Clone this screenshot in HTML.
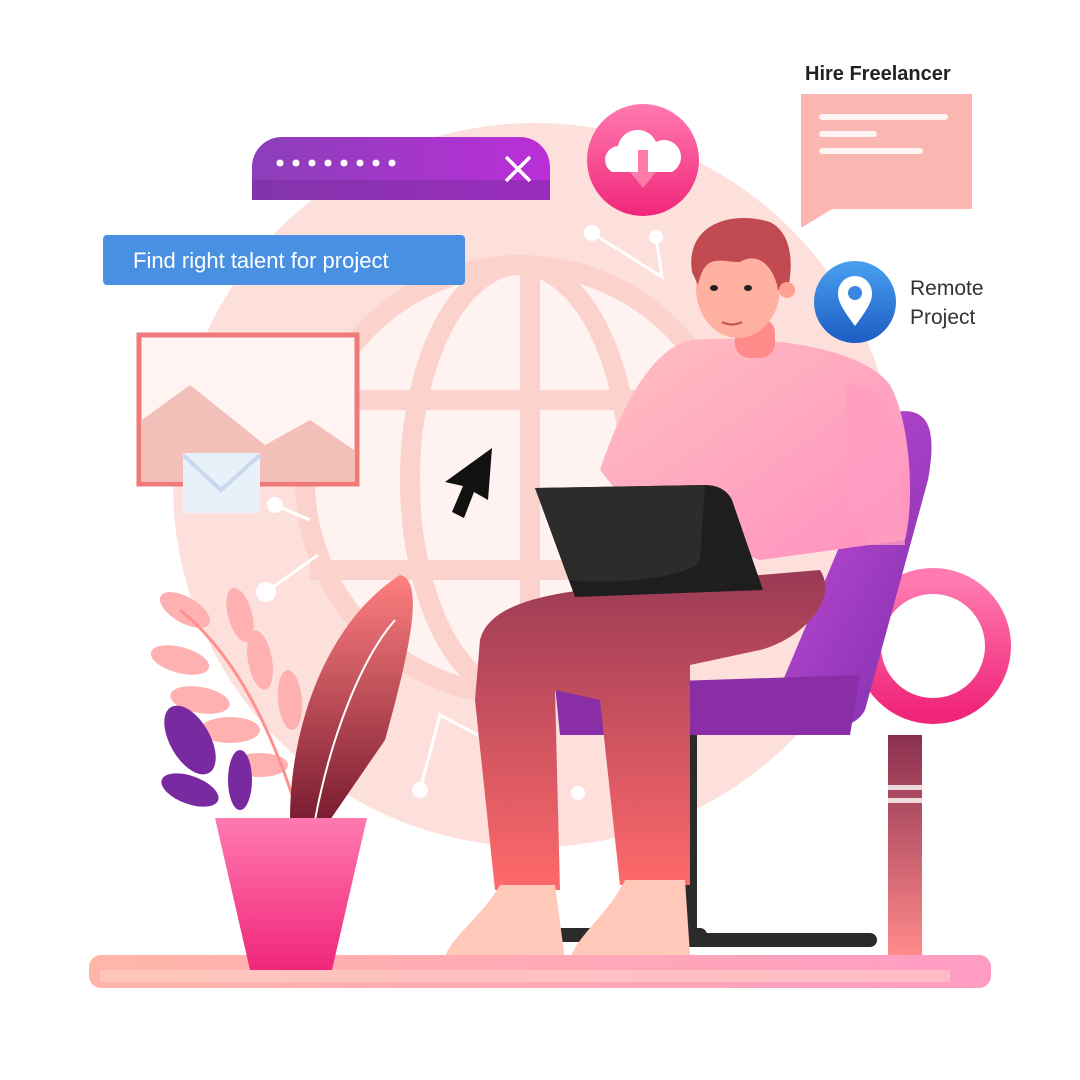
<!DOCTYPE html>
<html><head><meta charset="utf-8"><style>
html,body{margin:0;padding:0;background:#fff;}
svg{display:block}
text{font-family:"Liberation Sans",sans-serif}
</style></head><body>
<svg width="1080" height="1080" viewBox="0 0 1080 1080" xmlns="http://www.w3.org/2000/svg">
<defs>
<linearGradient id="bar" x1="0" x2="1"><stop offset="0" stop-color="#8a3fb8"/><stop offset="1" stop-color="#bb2fd9"/></linearGradient>
<linearGradient id="pink" x1="0" y1="0" x2="0" y2="1"><stop offset="0" stop-color="#ff7ab0"/><stop offset="1" stop-color="#f0267a"/></linearGradient>
<linearGradient id="blue" x1="0" y1="0" x2="0" y2="1"><stop offset="0" stop-color="#4aa0f0"/><stop offset="1" stop-color="#1d5cc4"/></linearGradient>
<linearGradient id="pants" x1="0" y1="0" x2="0" y2="1"><stop offset="0" stop-color="#9a3a55"/><stop offset="1" stop-color="#ff6a6a"/></linearGradient>
<linearGradient id="shirt" x1="0" y1="0" x2="1" y2="1"><stop offset="0" stop-color="#ffc0c0"/><stop offset="1" stop-color="#ff8fc0"/></linearGradient>
<linearGradient id="chair" x1="0" y1="0" x2="1" y2="1"><stop offset="0" stop-color="#d050e0"/><stop offset="1" stop-color="#7a2ea8"/></linearGradient>
<linearGradient id="floor" x1="0" x2="1"><stop offset="0" stop-color="#ffb6a8"/><stop offset="1" stop-color="#ff9cc4"/></linearGradient>
<linearGradient id="leg" x1="0" y1="0" x2="0" y2="1"><stop offset="0" stop-color="#8a3050"/><stop offset="1" stop-color="#ff8a8a"/></linearGradient>
<linearGradient id="leaf" x1="0" y1="0" x2="0" y2="1"><stop offset="0" stop-color="#ff8080"/><stop offset="1" stop-color="#7a1c30"/></linearGradient>
</defs>
<circle cx="535" cy="485" r="362" fill="#fde0dc"/>
<circle cx="520" cy="480" r="215" fill="#fff3f1"/>
<g stroke="#fcd2cc" stroke-width="20" fill="none">
<circle cx="520" cy="480" r="215"/>
<ellipse cx="520" cy="480" rx="110" ry="215"/>
<line x1="530" y1="265" x2="530" y2="695"/>
<line x1="310" y1="400" x2="730" y2="400"/>
<line x1="310" y1="570" x2="730" y2="570"/>
</g>
<g stroke="#fff" stroke-width="3" fill="none"><polyline points="592,233 662,277 656,237"/><polyline points="275,505 310,520"/><polyline points="266,592 318,555"/><polyline points="420,790 440,715 478,735"/></g>
<g fill="#fff"><circle cx="592" cy="233" r="8"/><circle cx="656" cy="237" r="7"/><circle cx="275" cy="505" r="8"/><circle cx="266" cy="592" r="10"/><circle cx="420" cy="790" r="8"/><circle cx="578" cy="793" r="7"/></g>
<path d="M282,137 H520 A30,30 0 0 1 550,167 V200 H252 V167 A30,30 0 0 1 282,137Z" fill="url(#bar)"/>
<path d="M252,180 H550 V200 H252Z" fill="#7a2aa0" opacity=".5"/>
<g fill="#fff"><circle cx="280" cy="163" r="3.5"/><circle cx="296" cy="163" r="3.5"/><circle cx="312" cy="163" r="3.5"/><circle cx="328" cy="163" r="3.5"/><circle cx="344" cy="163" r="3.5"/><circle cx="360" cy="163" r="3.5"/><circle cx="376" cy="163" r="3.5"/><circle cx="392" cy="163" r="3.5"/></g>
<path d="M506,157 L530,181 M530,157 L506,181" stroke="#fff" stroke-width="3.5"/>
<rect x="103" y="235" width="362" height="50" rx="4" fill="#4a90e2"/>
<text x="133" y="268" font-size="22" fill="#fff">Find right talent for project</text>
<circle cx="643" cy="160" r="56" fill="url(#pink)"/>
<path d="M612,172 a14,14 0 0 1 6,-26 a20,20 0 0 1 38,-4 a14,14 0 0 1 16,30Z" fill="#fff"/>
<path d="M638,150 v22 h-8 l13,16 l13,-16 h-8 v-22Z" fill="#ff7aa8"/>
<text x="805" y="80" font-size="20" font-weight="bold" fill="#222">Hire Freelancer</text>
<path d="M801,94 H972 V209 H832 L801,228Z" fill="#fbb6b2"/>
<g stroke="#fff" stroke-width="6" stroke-linecap="round" opacity=".85"><line x1="822" y1="117" x2="945" y2="117"/><line x1="822" y1="134" x2="874" y2="134"/><line x1="822" y1="151" x2="920" y2="151"/></g>
<circle cx="855" cy="302" r="41" fill="url(#blue)"/>
<path d="M855,326 C840,306 838,300 838,293 a17,17 0 0 1 34,0 C872,300 870,306 855,326Z" fill="#fff"/>
<circle cx="855" cy="293" r="7" fill="#3a86e0"/>
<text x="910" y="295" font-size="21" fill="#333">Remote</text>
<text x="910" y="324" font-size="21" fill="#333">Project</text>
<rect x="139" y="335" width="218" height="149" fill="#fff4f2" stroke="#ee7a7a" stroke-width="5"/>
<path d="M142,420 L190,385 L265,445 L310,420 L354,450 V481 H142Z" fill="#f0b2aa" opacity=".8"/>
<rect x="183" y="453" width="77" height="60" fill="#e8f0fa"/>
<path d="M183,455 L221,490 L260,455" stroke="#c8d8ee" stroke-width="4" fill="none"/>
<path d="M492,448 L445,482 L463,486 L452,512 L464,518 L474,492 L488,500Z" fill="#111"/>
<circle cx="933" cy="646" r="65" fill="none" stroke="url(#pink)" stroke-width="26"/>
<rect x="888" y="735" width="34" height="220" fill="url(#leg)"/>
<rect x="888" y="785" width="34" height="5" fill="#fff" opacity=".8"/><rect x="888" y="798" width="34" height="5" fill="#fff" opacity=".8"/>
<path d="M690,720 V940 H870" stroke="#2b2b2b" stroke-width="14" fill="none" stroke-linecap="round"/>
<path d="M560,935 H700" stroke="#2b2b2b" stroke-width="14" stroke-linecap="round"/>
<path d="M895,412 C935,405 935,440 928,480 L865,710 C855,730 820,735 760,735 L840,545 L895,540Z" fill="url(#chair)"/>
<path d="M555,685 L860,675 L850,735 L560,735Z" fill="#8a2ea8"/>
<path d="M690,340 C760,335 860,345 890,385 C910,420 915,500 905,540 L760,560 L640,520 L600,470 C620,410 650,350 690,340Z" fill="url(#shirt)"/>
<rect x="735" y="318" width="40" height="40" rx="15" fill="#ff8a8a"/>
<ellipse cx="738" cy="288" rx="42" ry="50" fill="#ffb0a0"/>
<path d="M692,272 C685,225 730,210 770,222 C795,235 792,270 788,290 L778,290 C775,270 760,250 740,262 C720,262 705,252 698,285Z" fill="#c04a50"/>
<circle cx="787" cy="290" r="8" fill="#ffa090"/>
<g fill="#222"><ellipse cx="714" cy="288" rx="4" ry="3"/><ellipse cx="748" cy="288" rx="4" ry="3"/></g>
<path d="M722,322 q10,5 20,0" stroke="#c05050" stroke-width="2" fill="none"/>
<path d="M480,640 C490,600 560,590 640,585 L820,570 C840,600 800,640 760,650 L690,665 L690,885 L620,885 L600,700 L555,690 L560,890 L495,890 L475,700Z" fill="url(#pants)"/>
<path d="M500,885 L555,885 L565,960 L445,965 C440,945 480,920 500,885Z" fill="#ffc8b8"/>
<path d="M625,880 L685,880 L690,955 L570,965 C570,940 605,920 625,880Z" fill="#ffc8b8"/>
<path d="M535,488 L705,485 C720,485 728,492 732,500 L763,590 L575,597 Z" fill="#1e1e1e"/>
<path d="M535,488 L705,485 L700,560 C690,580 600,585 570,580Z" fill="#2c2c2c"/>
<path d="M845,385 C885,380 900,420 900,470 L905,545 L870,545 L850,510 Z" fill="#ff9cc0" opacity=".8"/>
<rect x="89" y="955" width="902" height="33" rx="12" fill="url(#floor)"/>
<rect x="100" y="970" width="850" height="12" fill="#ffd0c8" opacity=".6"/>
<g fill="#ffb0b0">
<ellipse cx="185" cy="610" rx="28" ry="13" transform="rotate(30 185 610)"/>
<ellipse cx="180" cy="660" rx="30" ry="13" transform="rotate(15 180 660)"/>
<ellipse cx="200" cy="700" rx="30" ry="13" transform="rotate(10 200 700)"/>
<ellipse cx="230" cy="730" rx="30" ry="13"/>
<ellipse cx="240" cy="615" rx="12" ry="28" transform="rotate(-15 240 615)"/>
<ellipse cx="260" cy="660" rx="12" ry="30" transform="rotate(-10 260 660)"/>
<ellipse cx="290" cy="700" rx="12" ry="30" transform="rotate(-5 290 700)"/>
<ellipse cx="260" cy="765" rx="28" ry="12"/>
</g>
<path d="M180,610 C230,650 270,720 300,820" stroke="#ff9090" stroke-width="3" fill="none"/>
<path d="M290,820 C290,720 330,620 400,575 C425,580 410,650 385,740 L330,820Z" fill="url(#leaf)"/>
<path d="M315,820 C330,740 360,660 395,620" stroke="#fff" stroke-width="2" fill="none"/>
<g fill="#7a2aa0"><ellipse cx="190" cy="740" rx="20" ry="38" transform="rotate(-30 190 740)"/><ellipse cx="190" cy="790" rx="30" ry="14" transform="rotate(20 190 790)"/><ellipse cx="240" cy="780" rx="12" ry="30"/></g>
<path d="M215,818 H367 L332,970 H250Z" fill="url(#pink)"/>
</svg>
</body></html>
